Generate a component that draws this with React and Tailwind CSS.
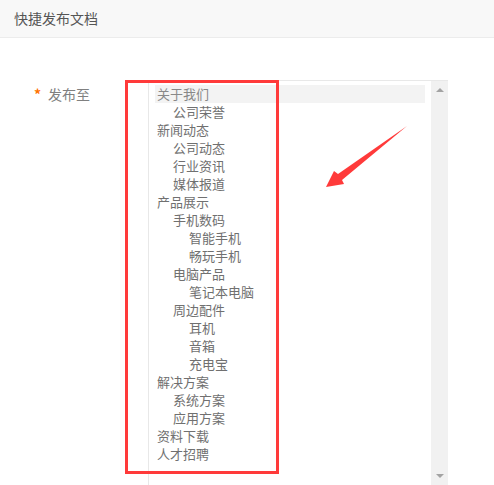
import React from "react";

const options = [
  { name: "关于我们", level: 0, active: true },
  { name: "公司荣誉", level: 1 },
  { name: "新闻动态", level: 0 },
  { name: "公司动态", level: 1 },
  { name: "行业资讯", level: 1 },
  { name: "媒体报道", level: 1 },
  { name: "产品展示", level: 0 },
  { name: "手机数码", level: 1 },
  { name: "智能手机", level: 2 },
  { name: "畅玩手机", level: 2 },
  { name: "电脑产品", level: 1 },
  { name: "笔记本电脑", level: 2 },
  { name: "周边配件", level: 1 },
  { name: "耳机", level: 2 },
  { name: "音箱", level: 2 },
  { name: "充电宝", level: 2 },
  { name: "解决方案", level: 0 },
  { name: "系统方案", level: 1 },
  { name: "应用方案", level: 1 },
  { name: "资料下载", level: 0 },
  { name: "人才招聘", level: 0 },
];

const indent = ["pl-[2px]", "pl-[18px]", "pl-[34px]"];

const App = () => {
  return (
    <div
      className="relative w-[494px] h-[485px] overflow-hidden bg-white"
      style={{ fontFamily: '"Noto Sans CJK SC", "Noto Sans", sans-serif' }}
    >
      <div className="h-[38px] bg-[#f8f8f8] border-b border-[#ececec] px-[14px] flex items-center text-[14px] text-[#555]">
        快捷发布文档
      </div>

      <div className="flex pt-[42px]">
        <div className="w-[148px] pl-[34px] pt-[4px] flex items-start text-[14px] text-[#808080] leading-[20px]">
          <span className="text-[#ff7200] font-bold mr-[7px]">*</span>
          <span>发布至</span>
        </div>

        <div className="w-[300px] h-[410px] flex border-l border-t border-[#e8e8e8]">
          <div className="flex-1 pl-[6px] pr-[6px] pt-[4px]">
            {options.map((o) => (
              <div
                key={o.name}
                className={`h-[18px] leading-[18px] text-[13px] ${indent[o.level]} ${
                  o.active ? "bg-[#f3f3f3] text-[#888]" : "text-[#707070]"
                }`}
              >
                {o.name}
              </div>
            ))}
          </div>
          <div className="w-[17px] bg-[#f1f1f1] flex flex-col items-center justify-between pt-[7px] pb-[12px]">
            <span className="w-0 h-0 border-x-[4px] border-x-transparent border-b-[4px] border-b-[#a3a3a3]" />
            <span className="w-0 h-0 border-x-[4px] border-x-transparent border-t-[4px] border-t-[#a3a3a3]" />
          </div>
        </div>
      </div>

      <div className="absolute left-[125px] top-[80px] w-[154px] h-[394px] border-[3px] border-[#ff3a3a]" />

      <svg
        className="absolute left-0 top-0"
        width="494"
        height="485"
        viewBox="0 0 494 485"
      >
        <polygon
          points="407,126 338,174 334,171 326,187 344,184 342,180"
          fill="#ff3a3a"
        />
      </svg>
    </div>
  );
};

export default App;
